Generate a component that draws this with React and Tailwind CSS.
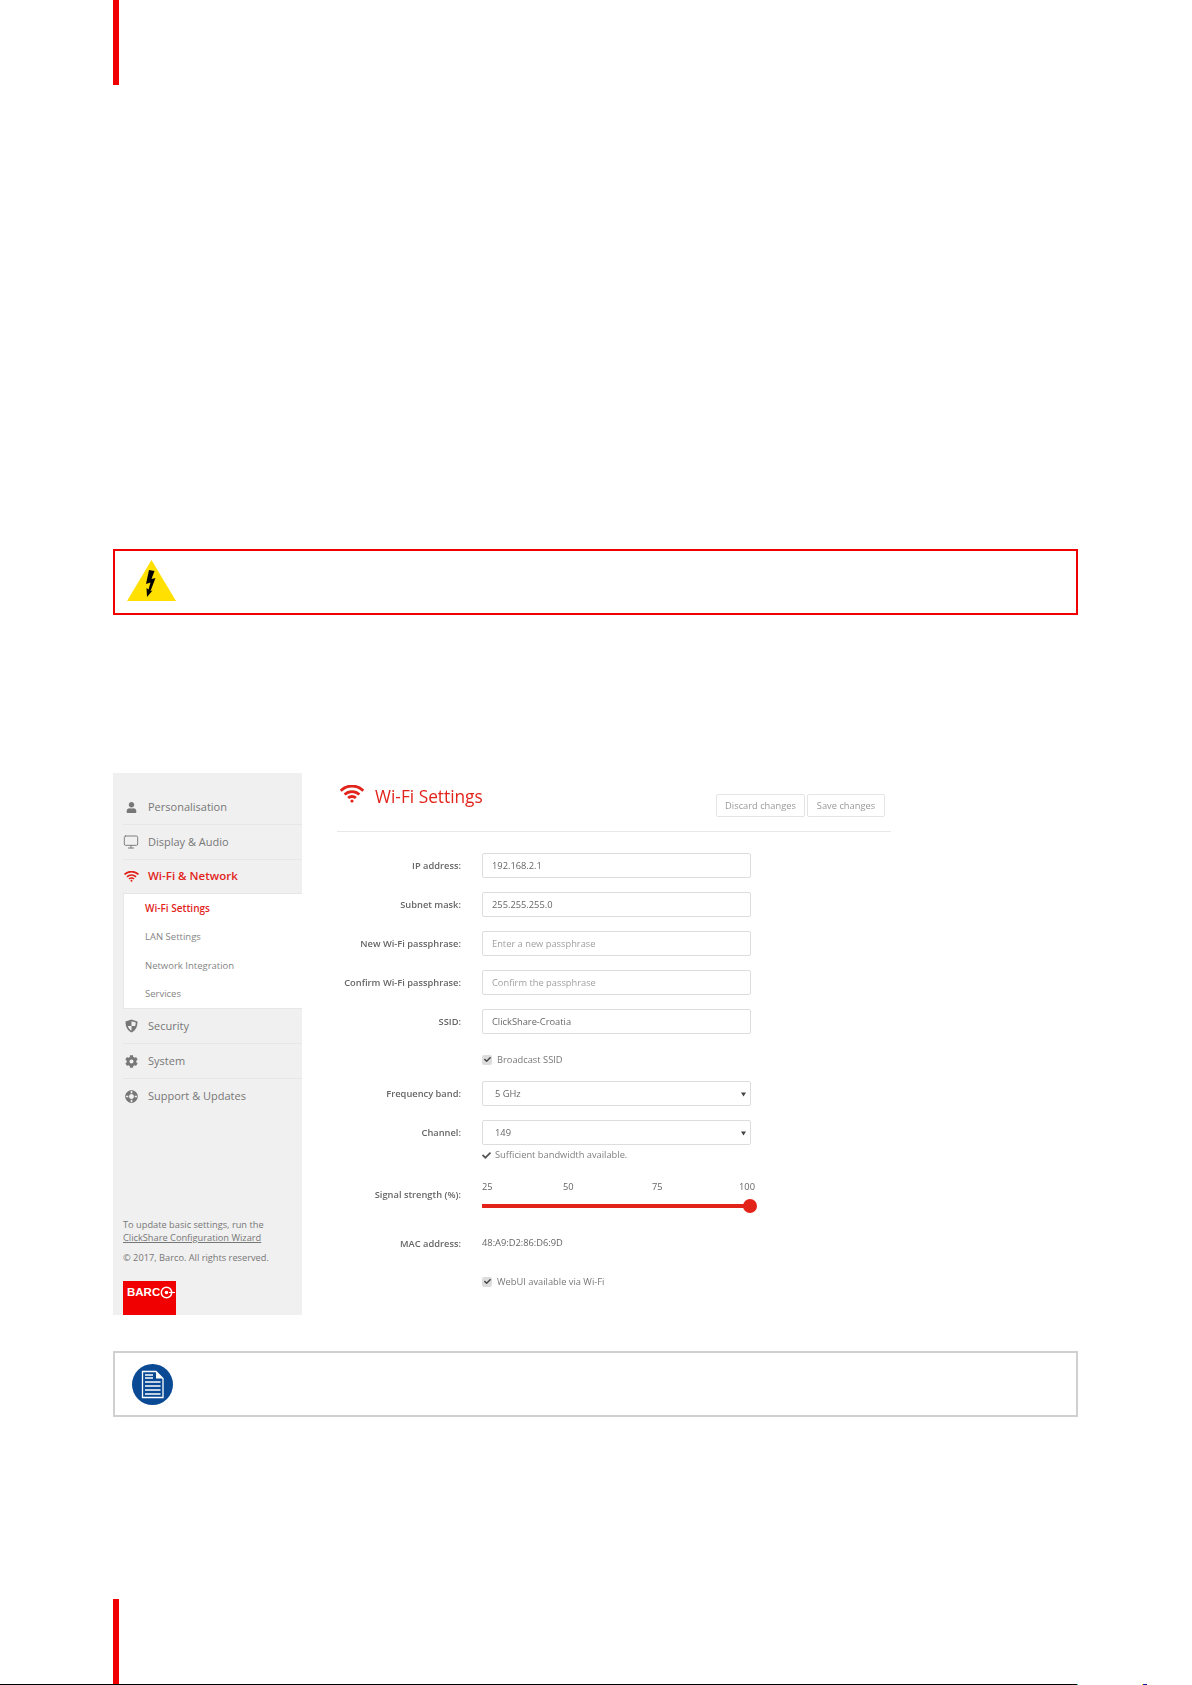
import React from 'react';
import { FaUser, FaCog, FaLifeRing, FaCheck } from 'react-icons/fa';
import { Monitor } from 'lucide-react';

const WifiIcon = ({ width, height }) => (
    <svg width={width} height={height} viewBox="0 0 24 18" fill="none" stroke="currentColor" strokeWidth="2.8">
        <path d="M0.7 5.7 A16 16 0 0 1 23.3 5.7" />
        <path d="M4.6 9.6 A10.5 10.5 0 0 1 19.4 9.6" />
        <path d="M8.1 13.1 A5.5 5.5 0 0 1 15.9 13.1" />
        <circle cx="12" cy="16" r="1.6" fill="currentColor" stroke="none" />
    </svg>
);

const ShieldIcon = () => (
    <svg width="13" height="14" viewBox="0 0 13 14">
        <path d="M6.5 0.5 L12.5 2.5 C12.5 8 10.5 11.5 6.5 13.5 C2.5 11.5 0.5 8 0.5 2.5 Z" fill="#777" />
        <path d="M6.5 2.2 L10.8 3.6 C10.7 4.9 10.5 6 10.2 7 L6.5 7 Z M6.5 7 L2.8 7 C3.4 9 4.6 10.6 6.5 11.7 Z" fill="#f0f0f0" />
    </svg>
);

const navItems = [
    { label: 'Personalisation', icon: <FaUser size={11} /> },
    { label: 'Display & Audio', icon: <Monitor size={16} strokeWidth={1.4} /> },
    { label: 'Wi-Fi & Network', icon: <WifiIcon width={15} height={11} />, active: true },
];

const navItemsBottom = [
    { label: 'Security', icon: <ShieldIcon /> },
    { label: 'System', icon: <FaCog size={13} /> },
    { label: 'Support & Updates', icon: <FaLifeRing size={13} className="rotate-45" />, last: true },
];

const NavRow = ({ item }) => (
    <div
        className={`ml-[10px] flex items-center gap-[9px] ${
            item.active ? 'h-[33px] pb-[1px] text-[11.5px] font-semibold text-[#e2231a]' : 'h-[35px] text-[11px] text-[#777]'
        } ${item.active || item.last ? '' : 'border-b border-[#e6e6e6]'} ${item.last ? 'pb-[1px]' : ''}`}
    >
        <span className={`flex w-[16px] justify-center ${item.active ? 'text-[#e2231a]' : 'text-[#777]'}`}>
            {item.icon}
        </span>
        <span>{item.label}</span>
    </div>
);

const Sidebar = () => (
    <aside className="flex h-[542px] w-[189px] shrink-0 flex-col bg-[#f0f0f0] pt-[17px]">
        {navItems.map((item) => (
            <NavRow key={item.label} item={item} />
        ))}
        <div className="ml-[10px] flex h-[116px] flex-col border border-r-0 border-[#e6e6e6] bg-white pl-[21px] text-[9.5px] text-[#858585]">
            <div className="flex h-[29px] items-center text-[10px] font-semibold text-[#e2231a]">Wi-Fi Settings</div>
            <div className="flex h-[29px] items-center">LAN Settings</div>
            <div className="flex h-[29px] items-center">Network Integration</div>
            <div className="flex h-[27px] items-center">Services</div>
        </div>
        {navItemsBottom.map((item) => (
            <NavRow key={item.label} item={item} />
        ))}
        <div className="ml-[10px] mt-auto text-[9.25px] text-[#777]">
            <p className="leading-[13px]">To update basic settings, run the</p>
            <p className="leading-[13px] underline">ClickShare Configuration Wizard</p>
            <p className="mt-[7px] leading-[13px]">© 2017, Barco. All rights reserved.</p>
            <div className="mt-[17px] flex h-[34px] w-[53px] items-start bg-[#f00000] pl-[4px] pt-[5px] text-white">
                <span className="font-['Liberation_Sans',sans-serif] text-[11.5px] font-bold leading-[13px]">BARC</span>
                <svg width="15" height="13" viewBox="0 0 15 13">
                    <circle cx="6.5" cy="6.5" r="5.2" fill="none" stroke="#fff" strokeWidth="1.5" />
                    <circle cx="6.5" cy="6.5" r="1.8" fill="#fff" />
                    <path d="M9 6.5 H15" stroke="#fff" strokeWidth="1.1" />
                </svg>
            </div>
        </div>
    </aside>
);

const Label = ({ children }) => (
    <div className="w-[124px] shrink-0 pt-[1px] text-right text-[9.3px] font-semibold text-[#666]">{children}</div>
);

const InputRow = ({ label, value, placeholder }) => (
    <div className="flex h-[25px] items-center gap-[21px]">
        <Label>{label}</Label>
        <div className={`flex h-[25px] w-[269px] items-center rounded-[2px] border border-[#ddd] pl-[9px] pt-[1px] text-[9.3px] ${placeholder ? 'text-[#a0a0a0]' : 'text-[#666]'}`}>
            {value || placeholder}
        </div>
    </div>
);

const SelectRow = ({ label, value }) => (
    <div className="flex h-[25px] items-center gap-[21px]">
        <Label>{label}</Label>
        <div className="flex h-[25px] w-[269px] items-center justify-between rounded-[2px] border border-[#ddd] pl-[12px] pr-[4px] pt-[1px] text-[9.3px] text-[#666]">
            <span>{value}</span>
            <svg width="5" height="5" viewBox="0 0 5 5">
                <path d="M0 0.5 H5 L2.5 4.5 Z" fill="#444" />
            </svg>
        </div>
    </div>
);

const CheckRow = ({ label }) => (
    <div className="ml-[145px] flex h-[14px] items-center gap-[5px] pt-[1px] text-[9.3px] text-[#777]">
        <span className="flex h-[10px] w-[10px] items-center justify-center rounded-[2px] bg-[#ddd] text-[#444]">
            <FaCheck size={7} />
        </span>
        <span>{label}</span>
    </div>
);

const WifiPanel = () => (
    <section className="ml-[35px] h-[542px] w-[554px]">
        <div className="flex h-[59px] items-start border-b border-[#e8e8e8]">
            <span className="ml-[3px] mt-[12px] text-[#e2231a]">
                <WifiIcon width={24} height={18} />
            </span>
            <h1 className="ml-[11px] mt-[10px] text-[17.3px] leading-[27px] text-[#e2231a]">Wi-Fi Settings</h1>
            <div className="ml-auto mr-[6px] mt-[21px] flex gap-[2px] text-[9.3px] text-[#999]">
                <button className="h-[23px] w-[89px] rounded-[2px] border border-[#e4e4e4] pt-[1px]">Discard changes</button>
                <button className="h-[23px] w-[78px] rounded-[2px] border border-[#e4e4e4] pt-[1px]">Save changes</button>
            </div>
        </div>
        <div className="flex flex-col pt-[21px]">
            <div className="flex flex-col gap-[14px]">
                <InputRow label="IP address:" value="192.168.2.1" />
                <InputRow label="Subnet mask:" value="255.255.255.0" />
                <InputRow label="New Wi-Fi passphrase:" placeholder="Enter a new passphrase" />
                <InputRow label="Confirm Wi-Fi passphrase:" placeholder="Confirm the passphrase" />
                <InputRow label="SSID:" value="ClickShare-Croatia" />
            </div>
            <div className="mt-[18px]">
                <CheckRow label="Broadcast SSID" />
            </div>
            <div className="mt-[15px] flex flex-col gap-[14px]">
                <SelectRow label="Frequency band:" value="5 GHz" />
                <SelectRow label="Channel:" value="149" />
            </div>
            <div className="ml-[145px] mt-[3px] flex h-[14px] items-center gap-[4px] text-[9.3px] text-[#808080]">
                <FaCheck size={9} className="text-[#555]" />
                <span>Sufficient bandwidth available.</span>
            </div>
            <div className="mt-[18px] flex items-center gap-[21px]">
                <div className="pb-[4px]">
                    <Label>Signal strength (%):</Label>
                </div>
                <div className="w-[276px]">
                    <div className="flex text-[9.3px] leading-[13px] text-[#666]">
                        <span className="w-[81px]">25</span>
                        <span className="w-[89px]">50</span>
                        <span className="w-[87px]">75</span>
                        <span>100</span>
                    </div>
                    <div className="relative mt-[6px] h-[14px] w-[275px]">
                        <div className="absolute left-0 right-[4px] top-[5px] h-[4px] bg-[#e2231a]" />
                        <div className="absolute right-0 top-0 h-[14px] w-[14px] rounded-full bg-[#e2231a]" />
                    </div>
                </div>
            </div>
            <div className="mt-[23px] flex h-[14px] items-center gap-[21px]">
                <Label>MAC address:</Label>
                <span className="text-[9.3px] text-[#666]">48:A9:D2:86:D6:9D</span>
            </div>
            <div className="mt-[24px]">
                <CheckRow label="WebUI available via Wi-Fi" />
            </div>
        </div>
    </section>
);

const App = () => (
    <div className="relative h-[1685px] w-[1192px] overflow-hidden bg-white font-['Open_Sans',sans-serif]">
        <div className="ml-[113px] h-[85px] w-[6px] bg-[#f00000]" />

        <div className="ml-[113px] mt-[464px] flex h-[66px] w-[965px] items-center border-2 border-[#f00000] pl-[12px]">
            <svg width="49" height="42" viewBox="0 0 49 42" className="mb-[2px]">
                <path d="M24.5 0 L49 41 H0 Z" fill="#ffe000" />
                <path d="M22 10 L27.5 11 L24.5 19 L28.5 18 L23.5 31 L25.5 30.5 L20 37 L19.5 28 L21.5 29.5 L23.5 22.5 L19 24 Z" fill="#000" />
            </svg>
        </div>

        <div className="ml-[113px] mt-[158px] flex blur-[0.4px]">
            <Sidebar />
            <WifiPanel />
        </div>

        <div className="ml-[113px] mt-[36px] flex h-[66px] w-[965px] items-center border-2 border-[#d0d0d0] pl-[17px]">
            <svg width="41" height="41" viewBox="0 0 41 41">
                <circle cx="20.5" cy="20.5" r="20.5" fill="#0a4a95" />
                <path d="M10.5 7.5 H24 L31 14.5 V33.5 H10.5 Z" fill="none" stroke="#fff" strokeWidth="1.3" />
                <path d="M24 7.5 V14.5 H31 Z" fill="#fff" />
                <path d="M13 11 H21 M13 14 H21 M13 18 H28.5 M13 22 H28.5 M13 26 H28.5 M13 30 H28.5" stroke="#fff" strokeWidth="1.6" />
            </svg>
        </div>

        <div className="ml-[113px] mt-[182px] h-[85px] w-[6px] bg-[#f00000]" />
        <div className="flex h-px">
            <div className="w-[1077px] bg-black" />
            <div className="w-px bg-[#22cccc]" />
            <div className="ml-[64px] w-px bg-[#ffe000]" />
            <div className="w-[4px] bg-[#1a1aa0]" />
        </div>
    </div>
);

export default App;
